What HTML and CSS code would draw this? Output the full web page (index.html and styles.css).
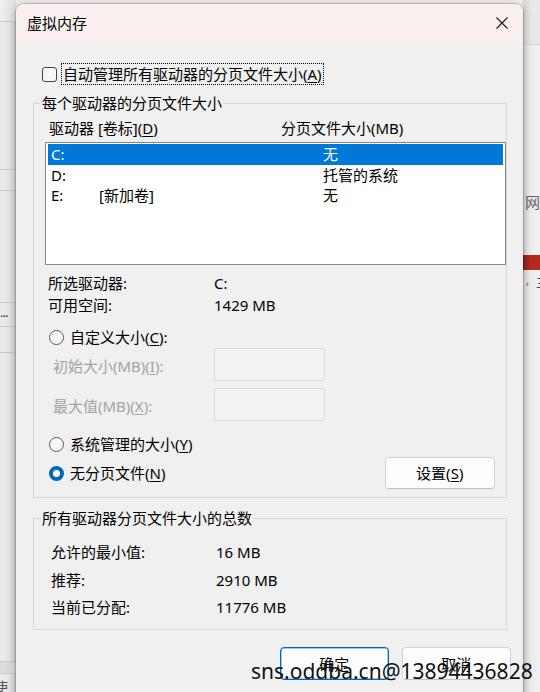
FILE: index.html
```html
<!DOCTYPE html>
<html lang="zh-CN">
<head>
<meta charset="utf-8">
<title>虚拟内存</title>
<link rel="stylesheet" href="styles.css">
</head>
<body>
<div class="desktop">
  <div class="bg-left">
    <div class="seg s1"></div>
    <div class="seg s2"></div>
    <div class="seg s3"></div>
    <div class="seg s4"></div>
    <div class="seg s5"><span class="dots">...</span></div>
    <div class="seg s6"></div>
    <div class="seg s7"></div>
    <div class="seg s8"></div>
    <div class="seg s9"><span class="use">使用</span></div>
  </div>

  <div class="bg-right">
    <div class="rseg r1"></div>
    <div class="rseg r2"></div>
    <div class="rseg r3"><span class="wang">网</span></div>
    <div class="rseg r4"></div>
    <div class="rseg r5"></div>
    <div class="rseg r6"><span class="comma">,</span><span class="zhu">主</span></div>
  </div>

  <div class="dialog">
    <div class="titlebar">
      <span class="title">虚拟内存</span>
      <span class="close">
        <svg width="12" height="12" viewBox="0 0 12 12"><path d="M0.5 0.5 L11.5 11.5 M11.5 0.5 L0.5 11.5" stroke="#1b1b1b" stroke-width="1.1" fill="none"/></svg>
      </span>
    </div>

    <div class="content">
      <div class="check-row">
        <span class="checkbox"></span>
        <span class="focus-label">自动管理所有驱动器的分页文件大小(<u>A</u>)</span>
      </div>

      <fieldset class="group group1">
        <legend>每个驱动器的分页文件大小</legend>
        <div class="g1-body">
          <div class="col-head">
            <span class="ch1">驱动器 [卷标](<u>D</u>)</span>
            <span class="ch2">分页文件大小(MB)</span>
          </div>
          <div class="listbox">
            <div class="lrow selected"><span>C:</span><span></span><span>无</span></div>
            <div class="lrow"><span>D:</span><span></span><span>托管的系统</span></div>
            <div class="lrow"><span>E:</span><span>[新加卷]</span><span>无</span></div>
          </div>

          <div class="info-row first"><span class="ilabel">所选驱动器:</span><span>C:</span></div>
          <div class="info-row"><span class="ilabel">可用空间:</span><span>1429 MB</span></div>

          <div class="radio-row custom"><span class="radio"></span><span class="rlabel">自定义大小(<u>C</u>):</span></div>

          <div class="field-row f1"><span class="flabel">初始大小(MB)(<u>I</u>):</span><span class="input"></span></div>
          <div class="field-row f2"><span class="flabel">最大值(MB)(<u>X</u>):</span><span class="input"></span></div>

          <div class="radio-row sys"><span class="radio"></span><span class="rlabel">系统管理的大小(<u>Y</u>)</span></div>

          <div class="last-row">
            <div class="radio-row nofile"><span class="radio checked"></span><span class="rlabel">无分页文件(<u>N</u>)</span></div>
            <span class="btn set-btn">设置(<u>S</u>)</span>
          </div>
        </div>
      </fieldset>

      <fieldset class="group group2">
        <legend>所有驱动器分页文件大小的总数</legend>
        <div class="g2-body">
          <div class="total-row"><span class="tlabel">允许的最小值:</span><span>16 MB</span></div>
          <div class="total-row"><span class="tlabel">推荐:</span><span>2910 MB</span></div>
          <div class="total-row"><span class="tlabel">当前已分配:</span><span>11776 MB</span></div>
        </div>
      </fieldset>

      <div class="buttons">
        <span class="btn default">确定</span>
        <span class="btn">取消</span>
      </div>
    </div>
  </div>

  <div class="watermark">sns.oddba.cn@13894436828</div>
</div>
</body>
</html>
```

FILE: styles.css
```css
* { box-sizing: border-box; }

html, body {
  margin: 0;
  padding: 0;
}

body {
  width: 540px;
  height: 692px;
  overflow: hidden;
  background: #ececec;
  font-family: "Noto Sans", "Noto Sans CJK SC", sans-serif;
  font-size: 15px;
  color: #000;
}

u {
  text-decoration: underline;
  text-underline-offset: 2px;
  text-decoration-thickness: 1px;
}

.desktop {
  position: relative;
  width: 540px;
  height: 692px;
  overflow: hidden;
  background: #ececec;
}

/* ---------- background windows ---------- */
.bg-left {
  position: absolute;
  left: 0;
  top: 0;
  width: 16px;
  height: 692px;
  display: flex;
  flex-direction: column;
  background: linear-gradient(to right, #ebebeb 0, #e6e6e6 55%, #d4d4d4 100%);
}
.seg { flex: none; border-bottom: 1px solid #c8c8c8; position: relative; overflow: hidden; }
.s1 { height: 22px; background: linear-gradient(to right, #f0f0f0, #dedede); }
.s2 { height: 148px; }
.s3 { height: 21px; }
.s4 { height: 112px; }
.s5 { height: 24px; }
.s6 { height: 26px; }
.s7 { height: 309px; }
.s8 { height: 12px; background: #dcdcdc; }
.s9 { height: 30px; border-bottom: none; }
.dots { position: absolute; left: 0; top: 2px; font-size: 13px; line-height: 14px; color: #1a3c6e; letter-spacing: -1px; }
.use { position: absolute; left: -7px; top: 6px; font-size: 15px; line-height: 15px; color: #555; }

.bg-right {
  position: absolute;
  left: 523px;
  top: 0;
  width: 17px;
  height: 692px;
  display: flex;
  flex-direction: column;
  background: linear-gradient(to right, #d8d8d8 0, #ececec 40%, #f1f1f1 100%);
}
.rseg { flex: none; position: relative; overflow: hidden; }
.r1 { height: 45px; background: linear-gradient(to right, #d6d6d6 0, #e8e8e8 50%); border-bottom: 1px solid #d2d2d2; }
.r2 { height: 148px; }
.r3 { height: 20px; }
.r4 { height: 42px; }
.r5 { height: 15px; background: linear-gradient(to right, #8f1d16 0, #b42a20 40%); }
.r6 { height: 30px; }
.wang { position: absolute; left: 2px; top: 1px; font-size: 15px; line-height: 17px; color: #666; }
.comma { position: absolute; left: 3px; top: 3px; font-size: 13px; line-height: 13px; color: #b85a30; }
.zhu { position: absolute; left: 13px; top: 5px; font-size: 14px; line-height: 14px; color: #444; }

/* ---------- dialog ---------- */
.dialog {
  position: absolute;
  left: 16px;
  top: 4px;
  width: 507px;
  height: 700px;
  background: #f0f0f0;
  border-radius: 8px 8px 0 0;
  box-shadow: 0 0 0 1px rgba(0, 0, 0, 0.17), 0 2px 10px rgba(0, 0, 0, 0.28);
  display: flex;
  flex-direction: column;
  overflow: hidden;
}

.titlebar {
  flex: none;
  height: 38px;
  background: #f9efee;
  display: flex;
  align-items: center;
  justify-content: space-between;
  padding-left: 11px;
  padding-right: 15px;
}
.title { line-height: 20px; color: #000; }
.close { display: flex; width: 12px; height: 12px; }

.content {
  display: flex;
  flex-direction: column;
  padding: 0 16px 0 17px;
}

.check-row {
  margin-top: 21px;
  margin-left: 9px;
  height: 22px;
  display: flex;
  align-items: center;
}
.checkbox {
  width: 15px;
  height: 15px;
  border: 1px solid #444;
  border-radius: 3px;
  background: #f6f6f6;
  flex: none;
}
.focus-label {
  margin-left: 4px;
  height: 22px;
  line-height: 20px;
  padding: 0 1px;
  border: 1px dotted #000;
}

/* ---------- group boxes ---------- */
.group {
  margin: 0;
  padding: 0;
  border: 1px solid #d9d9d9;
  min-width: 0;
}
.group legend {
  margin-left: 7px;
  padding: 0 1px;
  line-height: 20px;
  height: 20px;
}
.group1 { margin-top: 8px; }
.group2 { margin-top: 10px; }

.g1-body {
  padding: 5px 0 8px 11px;
  display: flex;
  flex-direction: column;
}

.col-head {
  display: flex;
  height: 20px;
  line-height: 20px;
  padding-left: 4px;
}
.ch1 { width: 232px; }

.listbox {
  margin-top: 4px;
  width: 461px;
  height: 123px;
  border: 1px solid #858585;
  background: #fff;
  padding: 1px 2px;
}
.lrow {
  display: grid;
  grid-template-columns: 48px 224px 1fr;
  height: 20.5px;
  line-height: 20.5px;
  padding-left: 3px;
}
.lrow.selected {
  background: #0078d7;
  color: #fff;
}

.info-row {
  display: flex;
  height: 22px;
  line-height: 22px;
  padding-left: 3px;
}
.info-row.first { margin-top: 7px; }
.ilabel { width: 166px; }

.radio-row {
  display: flex;
  align-items: center;
  height: 20px;
  padding-left: 4px;
}
.radio {
  width: 15px;
  height: 15px;
  border: 1px solid #585858;
  border-radius: 50%;
  background: #f7f7f7;
  flex: none;
}
.radio.checked {
  border: none;
  background: radial-gradient(circle, #ffffff 0 3.3px, #0067c0 3.9px);
}
.rlabel { margin-left: 6px; line-height: 20px; }
.radio-row.custom { margin-top: 11px; }
.radio-row.sys { margin-top: 13px; }

.field-row {
  display: flex;
  align-items: center;
  padding-left: 8px;
  color: #a3a3a3;
}
.field-row.f1 { margin-top: 1px; }
.field-row.f2 { margin-top: 7px; }
.flabel { width: 161px; line-height: 20px; padding-top: 2px; }
.input {
  width: 111px;
  height: 33px;
  border: 1px solid #dadada;
  border-radius: 2px;
  background: #f2f2f2;
}

.last-row {
  margin-top: 3px;
  height: 32px;
  display: flex;
  align-items: center;
  justify-content: space-between;
  padding-right: 11.5px;
}

.btn {
  display: flex;
  align-items: center;
  justify-content: center;
  width: 109.5px;
  height: 33px;
  background: #fdfdfd;
  border: 1px solid #d3d3d3;
  border-bottom-color: #c0c0c0;
  border-radius: 4px;
  line-height: 20px;
  color: #000;
}
.set-btn { height: 32px; }
.btn.default {
  border: 1px solid #0067c0;
  box-shadow: inset 0 0 0 0.5px #4a8fd0;
}

.g2-body {
  padding: 11px 0 7.5px 17px;
  display: flex;
  flex-direction: column;
}
.total-row {
  display: flex;
  height: 27.5px;
  line-height: 27.5px;
}
.tlabel { width: 165px; }

.buttons {
  margin-top: 17px;
  margin-right: -4px;
  display: flex;
  justify-content: flex-end;
  gap: 12.5px;
}

/* ---------- watermark overlay ---------- */
.watermark {
  position: absolute;
  left: 251px;
  top: 661px;
  font-family: "Noto Sans", sans-serif;
  font-size: 21px;
  line-height: 21px;
  color: #111;
  white-space: nowrap;
}
```
